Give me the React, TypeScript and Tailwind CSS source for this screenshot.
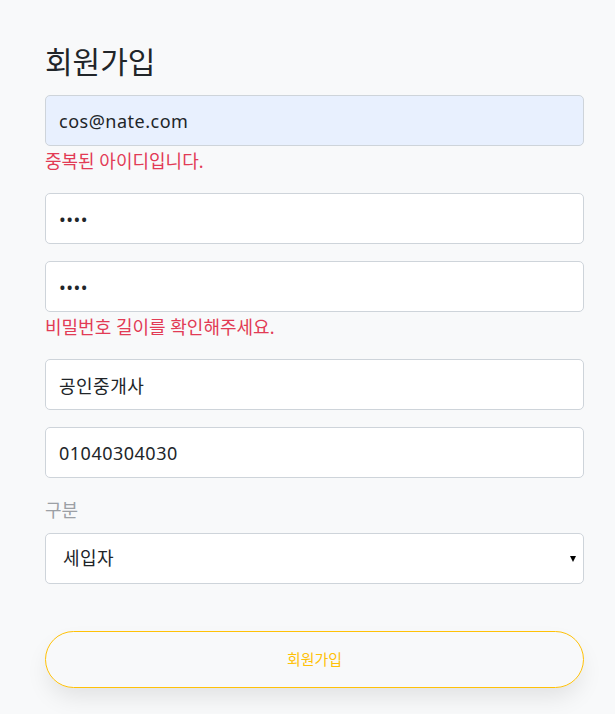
import { useState } from 'react';

const inputCls =
  'block w-full h-[51px] rounded-[5px] border border-[#ced4da] px-[13px] text-[18px] tracking-[0.5px] text-[#212529] outline-none';

export default function App() {
  const [role, setRole] = useState('세입자');

  return (
    <div
      className="min-h-[714px] bg-[#f8f9fa] pt-[41px] pl-[45px] pr-[31px]"
      style={{ fontFamily: '"Noto Sans", "Noto Sans CJK KR", sans-serif' }}
    >
      <div className="w-[539px]">
        <h2 className="text-[30px] leading-[42px] text-[#212529] mb-[12px]">회원가입</h2>

        <form onSubmit={(e) => e.preventDefault()}>
          <input type="email" defaultValue="cos@nate.com" className={inputCls + ' bg-[#e8f0fe]'} />
          <div className="h-[30px] leading-[30px] text-[18px] text-[#e23b55] mb-[17px]">중복된 아이디입니다.</div>

          <input type="password" defaultValue="1234" className={inputCls + ' bg-white mb-[17px]'} />

          <input type="password" defaultValue="1234" className={inputCls + ' bg-white'} />
          <div className="h-[30px] leading-[30px] text-[18px] text-[#e23b55] mb-[17px]">비밀번호 길이를 확인해주세요.</div>

          <input type="text" defaultValue="공인중개사" className={inputCls + ' bg-white mb-[17px]'} />

          <input type="text" defaultValue="01040304030" className={inputCls + ' bg-white'} />

          <label className="block mt-[17px] mb-[8px] h-[30px] leading-[30px] text-[18px] text-[#9ca0a5]">구분</label>
          <div className="relative">
            <select
              value={role}
              onChange={(e) => setRole(e.target.value)}
              className={inputCls + ' bg-white appearance-none pl-[17px]'}
            >
              <option>세입자</option>
              <option>공인중개사</option>
            </select>
            <span className="pointer-events-none absolute right-[8px] top-[23px] h-0 w-0 border-x-[3.5px] border-t-[6px] border-x-transparent border-t-black" />
          </div>

          <button
            type="submit"
            className="mt-[47px] block w-full h-[57px] rounded-full border border-[#ffc107] bg-transparent text-[15px] text-[#ffc107] shadow-[0_12px_24px_-4px_rgba(0,0,0,0.1)]"
          >
            회원가입
          </button>
        </form>
      </div>
    </div>
  );
}
